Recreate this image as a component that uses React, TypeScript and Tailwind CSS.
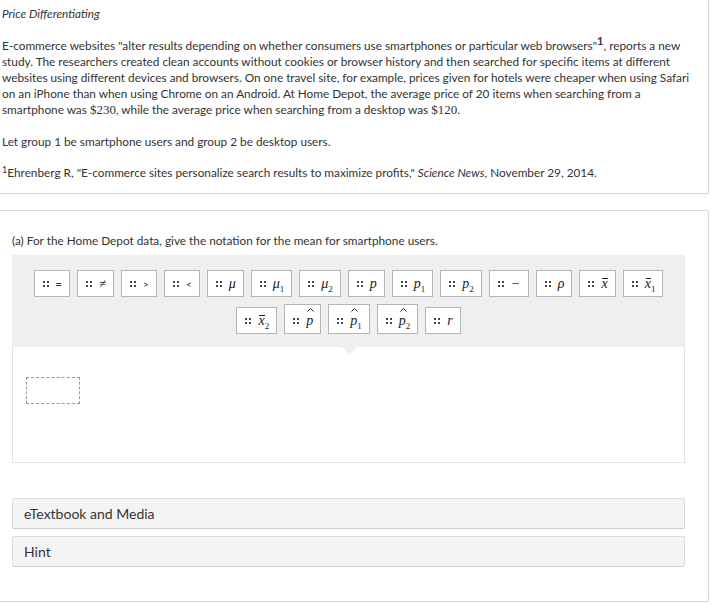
import type { ReactNode } from 'react'

const lato = "font-['Lato','Liberation_Sans',sans-serif]"
const math = "font-['Liberation_Serif','DejaVu_Serif',serif]"

function Grip() {
  return (
    <svg width="6" height="6" viewBox="0 0 6 6" className="shrink-0">
      <rect x="0" y="0" width="2" height="2" fill="#444" />
      <rect x="4" y="0" width="2" height="2" fill="#444" />
      <rect x="0" y="4" width="2" height="2" fill="#444" />
      <rect x="4" y="4" width="2" height="2" fill="#444" />
    </svg>
  )
}

function Chip({ children, tall = false }: { children: ReactNode; tall?: boolean }) {
  return (
    <div
      className={[
        'flex items-center gap-[7px] border border-[#b5b5b5] bg-white pl-[8px] pr-[7px]',
        tall ? 'h-[30px] pt-[4px]' : 'h-[27px]',
      ].join(' ')}
    >
      <Grip />
      <span className={`${math} flex items-end text-[14px] leading-none text-[#222]`}>{children}</span>
    </div>
  )
}

function Sub({ n }: { n: string }) {
  return <span className="not-italic text-[9px] leading-none translate-y-[3px]">{n}</span>
}

function Bar({ n }: { n?: string }) {
  return (
    <span className="inline-flex items-end">
      <span className="relative italic">
        <span className="absolute left-[1px] right-0 top-[1px] h-px bg-[#222]" />
        x
      </span>
      {n && <Sub n={n} />}
    </span>
  )
}

function Hat({ n }: { n?: string }) {
  return (
    <span className="inline-flex items-end">
      <span className="relative italic">
        <svg width="7" height="4" viewBox="0 0 7 4" className="absolute left-[1px] top-[-6px]">
          <path d="M0.5 3.5 L3.5 0.5 L6.5 3.5" fill="none" stroke="#222" strokeWidth="1" />
        </svg>
        p
      </span>
      {n && <Sub n={n} />}
    </span>
  )
}

function It({ c, n }: { c: string; n?: string }) {
  return (
    <span className="inline-flex items-end">
      <span className="italic">{c}</span>
      {n && <Sub n={n} />}
    </span>
  )
}

function Drawer({ label }: { label: string }) {
  return (
    <div className="flex h-[31px] items-center rounded-[2px] border border-[#dcdcdc] border-b-[#cdcdcd] bg-[#f4f4f4] px-[11px] text-[14px] leading-[18px] text-[#333]">
      {label}
    </div>
  )
}

export default function App() {
  return (
    <div className={`${lato} min-h-[604px] w-[713px] bg-white text-[11.8px] leading-[16px] text-[#333]`}>
      {/* Problem statement */}
      <div className="w-[709px] rounded-br-[3px] border-r border-b border-[#d6d6d6] pt-[6px] pb-[12px] pl-[2px] pr-[14px] shadow-[1px_1px_1px_rgba(0,0,0,0.04)]">
        <p className="italic">Price Differentiating</p>
        <p className="mt-[16px]">
          E-commerce websites "alter results depending on whether consumers use smartphones or particular web browsers"
          <sup className="text-[11px] font-bold leading-none">1</sup>, reports a new study. The researchers created
          clean accounts without cookies or browser history and then searched for specific items at different websites
          using different devices and browsers. On one travel site, for example, prices given for hotels were cheaper
          when using Safari on an iPhone than when using Chrome on an Android. At Home Depot, the average price of 20
          items when searching from a smartphone was{' '}
          <span className={`${math} text-[13px] leading-none`}>$230</span>, while the average price when searching from
          a desktop was <span className={`${math} text-[13px] leading-none`}>$120</span>.
        </p>
        <p className="mt-[16px]">Let group 1 be smartphone users and group 2 be desktop users.</p>
        <p className="mt-[15px]">
          <sup className="text-[9px] leading-none">1</sup>Ehrenberg R, "E-commerce sites personalize search results to
          maximize profits," <span className="italic">Science News</span>, November 29, 2014.
        </p>
      </div>

      {/* Question card */}
      <div className="mt-[16px] w-[709px] rounded-r-[3px] border-y border-r border-[#d6d6d6] pt-[22px] pb-[34px] pl-[12px] pr-[23px]">
        <p>(a) For the Home Depot data, give the notation for the mean for smartphone users.</p>

        <div className="relative mt-[6px] bg-[#efefef] pt-[15px] pb-[13px]">
          <div className="flex flex-wrap items-end justify-center gap-x-[7px] gap-y-[7px]">
            <Chip><span className="font-['Lato',sans-serif] text-[11px]">=</span></Chip>
            <Chip><span className="text-[13px]">≠</span></Chip>
            <Chip><span className="font-['Lato',sans-serif] text-[10px]">&gt;</span></Chip>
            <Chip><span className="font-['Lato',sans-serif] text-[10px]">&lt;</span></Chip>
            <Chip><It c="μ" /></Chip>
            <Chip><It c="μ" n="1" /></Chip>
            <Chip><It c="μ" n="2" /></Chip>
            <Chip><It c="p" /></Chip>
            <Chip><It c="p" n="1" /></Chip>
            <Chip><It c="p" n="2" /></Chip>
            <Chip><span className="px-[1px]">−</span></Chip>
            <Chip><It c="ρ" /></Chip>
            <Chip><Bar /></Chip>
            <Chip><Bar n="1" /></Chip>
            <Chip><Bar n="2" /></Chip>
            <Chip tall><Hat /></Chip>
            <Chip tall><Hat n="1" /></Chip>
            <Chip tall><Hat n="2" /></Chip>
            <Chip><It c="r" /></Chip>
          </div>
          <span className="absolute left-1/2 top-full h-0 w-0 -translate-x-1/2 border-x-[7px] border-t-[8px] border-x-transparent border-t-[#efefef]" />
        </div>

        <div className="h-[116px] border-x border-b border-[#e3e3e3] bg-white pt-[30px] pl-[13px]">
          <div className="h-[27px] w-[54px] border border-dashed border-[#999]" />
        </div>

        <div className="mt-[35px] flex flex-col gap-[7px]">
          <Drawer label="eTextbook and Media" />
          <Drawer label="Hint" />
        </div>
      </div>
    </div>
  )
}
